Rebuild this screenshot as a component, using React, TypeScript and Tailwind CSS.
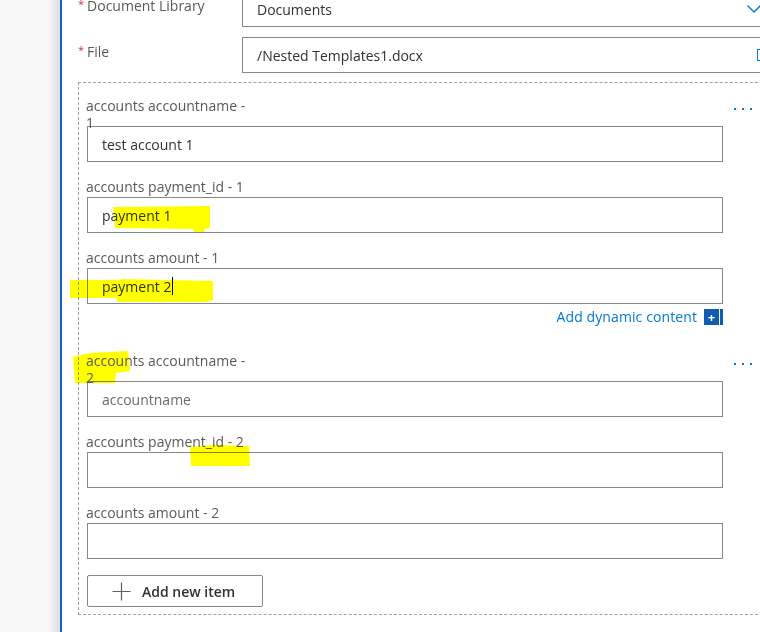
import React from "react";

const labelCls = "-ml-px text-[14px] leading-5 text-[#5c5a58] whitespace-nowrap";
const inputCls =
  "w-[636px] h-[36px] border border-[#8a8886] flex items-center px-[14px] text-[14px] text-[#323130]";

function Dots() {
  return (
    <div className="flex gap-[6px] pt-[12px] pl-[12px]">
      <span className="w-[2px] h-[2px] bg-[#0078d4]" />
      <span className="w-[2px] h-[2px] bg-[#0078d4]" />
      <span className="w-[2px] h-[2px] bg-[#0078d4]" />
    </div>
  );
}

function Field({ label, value, placeholder }: { label: string; value?: string; placeholder?: string }) {
  return (
    <div className="mt-[15px]">
      <div className={labelCls}>{label}</div>
      <div className={inputCls}>
        {value ? <span>{value}</span> : <span className="text-[#6b6b6b]">{placeholder}</span>}
      </div>
    </div>
  );
}

function Group({
  index,
  name,
  payment,
  amount,
  cursor,
}: {
  index: number;
  name?: string;
  payment?: string;
  amount?: string;
  cursor?: boolean;
}) {
  return (
    <div>
      <div className="flex h-[30px]">
        <div className="w-[636px] -ml-px pt-[1px] text-[14px] leading-[17px] text-[#5c5a58] relative z-10">
          accounts accountname -<br />
          {index}
        </div>
        <Dots />
      </div>
      <div className={inputCls}>
        {name ? <span>{name}</span> : <span className="text-[#6b6b6b]">accountname</span>}
      </div>
      <Field label={`accounts payment_id - ${index}`} value={payment} />
      <div className="mt-[15px]">
        <div className={labelCls}>accounts amount - {index}</div>
        <div className={inputCls}>
          <span>{amount}</span>
          {cursor && <span className="w-px h-[18px] bg-black ml-px" />}
        </div>
      </div>
    </div>
  );
}

export default function App() {
  return (
    <div
      className="relative w-[760px] h-[632px] overflow-hidden bg-white flex"
      style={{ fontFamily: '"Segoe UI", "Open Sans", "Noto Sans", sans-serif' }}
    >
      {/* left canvas */}
      <div className="w-[60px] flex shrink-0">
        <div className="flex-1 bg-[#f8f8f8]" />
        <div className="w-[13px] bg-gradient-to-r from-[#f8f8f8] to-[#dedede]" />
      </div>
      <div className="w-[2px] shrink-0 bg-[#1a5dc9]" />

      <div className="w-[736px] shrink-0 pl-[16px] -mt-[9px]">
        {/* Document Library */}
        <div className="flex">
          <div className="w-[164px] pt-[5px] text-[14px] leading-5 text-[#5c5a58] flex">
            <span className="text-[#d13438] text-[11px] leading-3 mr-[3px] mt-[2px]">*</span>
            Document Library
          </div>
          <div className="w-[540px] h-[36px] border border-[#8a8886] flex items-center pl-[14px] pr-[20px] text-[14px] text-[#323130]">
            <span>Documents</span>
            <svg className="ml-auto" width="14" height="8" viewBox="0 0 14 8">
              <polyline points="0.5,0.5 7,7 13.5,0.5" fill="none" stroke="#0078d4" strokeWidth="1.3" />
            </svg>
          </div>
        </div>

        {/* File */}
        <div className="flex mt-[10px]">
          <div className="w-[164px] pt-[5px] text-[14px] leading-5 text-[#5c5a58] flex">
            <span className="text-[#d13438] text-[11px] leading-3 mr-[3px] mt-[2px]">*</span>
            File
          </div>
          <div className="w-[540px] h-[36px] border border-[#8a8886] flex items-center pl-[14px] pr-[12px] text-[14px] text-[#323130]">
            <span>/Nested Templates1.docx</span>
            <span className="ml-auto w-[12px] h-[12px] border border-[#0078d4]" />
          </div>
        </div>

        {/* Repeating section */}
        <div className="mt-[9px] w-[720px] border border-dashed border-[#a19f9d] pl-[8px] pt-[13px] pb-[7px]">
          <Group index={1} name="test account 1" payment="payment 1" amount="payment 2" cursor />

          <div className="w-[636px] mt-[4px] flex justify-end items-center gap-[7px]">
            <span className="text-[14px] leading-[18px] text-[#0078d4] tracking-[0.1px]">Add dynamic content</span>
            <div className="flex gap-[1px]">
              <span className="w-[15px] h-[16px] bg-[#0f5cb0] text-white flex items-center justify-center text-[13px] font-bold leading-none">
                +
              </span>
              <span className="w-[3px] h-[16px] bg-[#0f5cb0]" />
            </div>
          </div>

          <div className="mt-[25px]">
            <Group index={2} />
          </div>

          <button className="mt-[16px] w-[176px] h-[32px] border border-[#8a8886] rounded-[2px] flex items-center pl-[24px] gap-[11px] text-[14px] font-semibold text-[#323130]">
            <svg width="19" height="19" viewBox="0 0 19 19">
              <path d="M9.5 0.5v18M0.5 9.5h18" stroke="#605e5c" strokeWidth="1.2" fill="none" />
            </svg>
            Add new item
          </button>
        </div>
      </div>

      {/* yellow highlighter marks */}
      <svg
        className="absolute inset-0 pointer-events-none mix-blend-multiply"
        width="760"
        height="632"
        viewBox="0 0 760 632"
      >
        <g fill="#ffff00">
          <polygon points="113,207 210,206 210,228 205,229 204,232 194,232 193,229 115,228" />
          <polygon points="70,280 120,280 122,279 213,281 213,300 207,302 118,302 116,298 70,298" />
          <polygon points="73,357 90,353 128,351 130,371 116,373 115,383 75,383" />
          <polygon points="190,447 215,445 249,446 250,466 191,466" />
        </g>
      </svg>
    </div>
  );
}
